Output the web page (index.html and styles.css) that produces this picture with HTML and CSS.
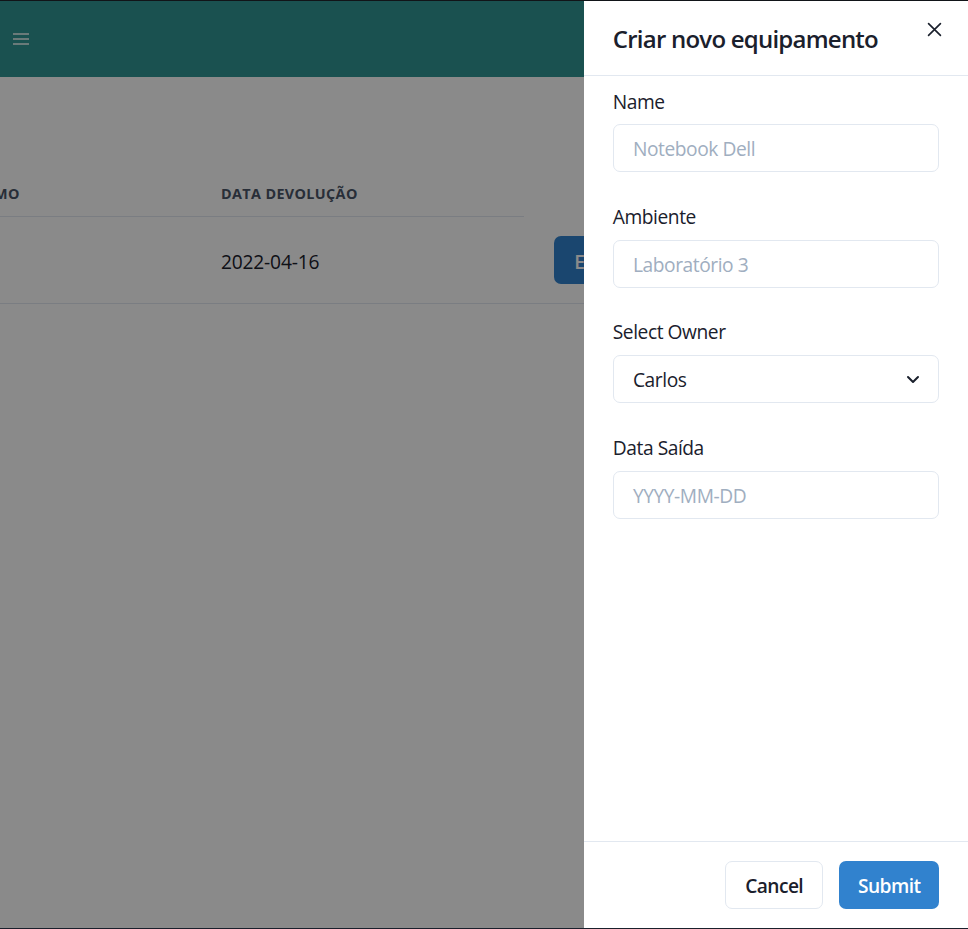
FILE: index.html
```html
<!DOCTYPE html>
<html lang="pt">
<head>
<meta charset="utf-8">
<title>Criar novo equipamento</title>
<link rel="stylesheet" href="styles.css">
</head>
<body>
<div class="page">
  <header class="topbar">
    <svg class="menu" width="18" height="12" viewBox="0 0 18 12" aria-hidden="true">
      <path d="M1 1h16M1 6h16M1 11h16" stroke="#fff" stroke-width="1.6" fill="none"/>
    </svg>
  </header>
  <main class="content">
    <div class="thead">
      <div class="th th-first">MO</div>
      <div class="th th-date">DATA DEVOLUÇÃO</div>
    </div>
    <div class="trow">
      <div class="td td-first"></div>
      <div class="td td-date">2022-04-16</div>
      <div class="td td-action"><button class="btn btn-blue">Editar</button></div>
    </div>
  </main>
  <div class="overlay"></div>
  <aside class="drawer">
    <div class="drawer-header">Criar novo equipamento</div>
    <button class="close" aria-label="Close">
      <svg width="15" height="15" viewBox="0 0 24 24" aria-hidden="true">
        <path d="M2.5 2.5l19 19M21.5 2.5l-19 19" stroke="#1a202c" stroke-width="2.6" stroke-linecap="round" fill="none"/>
      </svg>
    </button>
    <div class="drawer-body">
      <div class="field">
        <label class="label">Name</label>
        <div class="input placeholder">Notebook Dell</div>
      </div>
      <div class="field">
        <label class="label">Ambiente</label>
        <div class="input placeholder">Laboratório 3</div>
      </div>
      <div class="field">
        <label class="label">Select Owner</label>
        <div class="input select">
          <span>Carlos</span>
          <svg width="14" height="9" viewBox="0 0 14 9" aria-hidden="true">
            <path d="M2 2l5 5 5-5" stroke="#1a202c" stroke-width="2" fill="none" stroke-linecap="round" stroke-linejoin="round"/>
          </svg>
        </div>
      </div>
      <div class="field">
        <label class="label">Data Saída</label>
        <div class="input placeholder">YYYY-MM-DD</div>
      </div>
    </div>
    <div class="drawer-footer">
      <button class="btn btn-outline">Cancel</button>
      <button class="btn btn-blue btn-submit">Submit</button>
    </div>
  </aside>
</div>
</body>
</html>
```
FILE: styles.css
```css
* { box-sizing: border-box; }
html, body { margin: 0; padding: 0; }
body {
  width: 968px;
  height: 929px;
  overflow: hidden;
  border-top: 1px solid #111418;
  border-bottom: 1px solid #1a202c;
  font-family: "Open Sans", "Noto Sans", sans-serif;
  letter-spacing: -0.028em;
  color: #1a202c;
  background: #fff;
}
.page {
  position: relative;
  height: 927px;
  background: #fff;
  overflow: hidden;
}
.topbar {
  height: 76px;
  background: #319795;
  display: flex;
  align-items: center;
  padding-left: 12px;
}
.menu { display: block; opacity: 0.95; }
.content { padding-top: 91px; }
.thead {
  display: flex;
  width: 524px;
  border-bottom: 1px solid #e2e8f0;
}
.th {
  padding: 16px 0 12.8px;
  font-size: 14.4px;
  line-height: 19.2px;
  font-weight: 700;
  letter-spacing: 0.025em;
  text-transform: uppercase;
  color: #4a5568;
}
.th-first { width: 192px; padding-left: 0; margin-left: -6px; margin-right: 6px; }
.th-date { padding-left: 29px; }
.trow {
  display: flex;
  align-items: center;
  height: 87px;
  border-bottom: 1px solid #e2e8f0;
}
.td { font-size: 19.2px; }
.td-first { width: 192px; }
.td-date { width: 333px; padding-left: 29px; padding-top: 3px; letter-spacing: -0.01em; }
.td-action { padding-left: 29px; }
.btn {
  height: 48px;
  padding: 2px 19.2px 0;
  border-radius: 7px;
  font-family: inherit;
  font-size: 19.2px;
  font-weight: 600;
  letter-spacing: -0.03em;
  cursor: pointer;
  border: 1px solid transparent;
}
.btn-blue { background: #3182ce; color: #fff; }
.btn-submit { padding: 2px 17.7px 0; }
.btn-outline { background: #fff; color: #1a202c; border-color: #e2e8f0; }
.overlay {
  position: absolute;
  inset: 0;
  background: rgba(0, 0, 0, 0.46);
}
.drawer {
  position: absolute;
  top: 0;
  right: 0;
  bottom: 0;
  width: 384px;
  background: #fff;
  display: flex;
  flex-direction: column;
}
.drawer-header {
  padding: 20.2px 28.8px 18.2px;
  font-size: 24px;
  line-height: 36px;
  font-weight: 600;
  letter-spacing: -0.032em;
  border-bottom: 1px solid #e2e8f0;
}
.close {
  position: absolute;
  top: 9.6px;
  right: 14.4px;
  width: 38px;
  height: 38px;
  border: 0;
  background: transparent;
  display: flex;
  align-items: center;
  justify-content: center;
  padding: 0;
}
.drawer-body {
  flex: 1;
  padding: 9.6px 28.8px;
  display: flex;
  flex-direction: column;
  gap: 29px;
}
.field { display: flex; flex-direction: column; }
.label {
  font-size: 19.2px;
  line-height: 28.8px;
  padding-top: 1.6px;
  margin-bottom: 8px;
}
.input {
  height: 48px;
  border: 1px solid #e2e8f0;
  border-radius: 7px;
  padding: 1px 19.2px 0;
  font-size: 19.2px;
  display: flex;
  align-items: center;
}
.placeholder { color: #a0aec0; }
.select { justify-content: space-between; padding-right: 18px; }
.drawer-footer {
  border-top: 1px solid #e2e8f0;
  padding: 19.2px 28.8px;
  display: flex;
  justify-content: flex-end;
  gap: 16px;
}
```
